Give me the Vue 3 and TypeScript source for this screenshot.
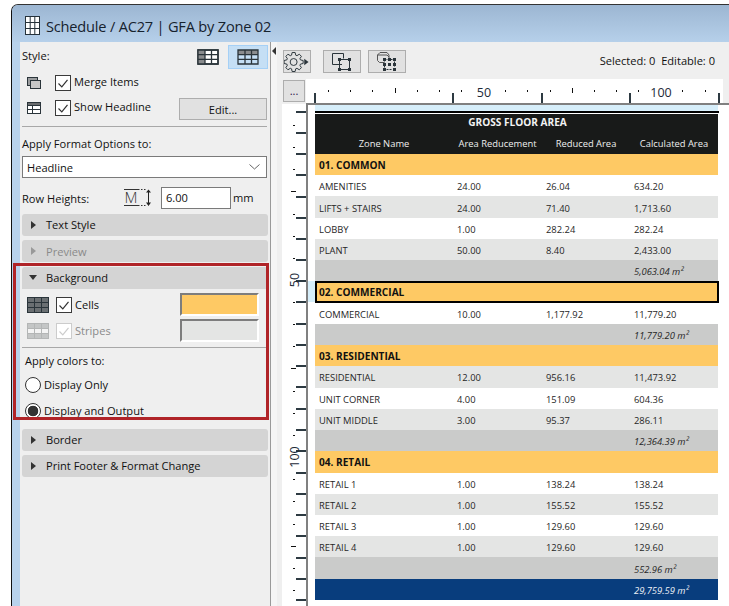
<script setup lang="ts">
type Row = { kind: 'group' | 'white' | 'gray' | 'total' | 'grand'; cells: string[]; selected?: boolean }

const row = (kind: Row['kind'], ...cells: string[]): Row => ({ kind, cells })

const rows: Row[] = [
  row('group', '01. COMMON'),
  row('white', 'AMENITIES', '24.00', '26.04', '634.20'),
  row('gray', 'LIFTS + STAIRS', '24.00', '71.40', '1,713.60'),
  row('white', 'LOBBY', '1.00', '282.24', '282.24'),
  row('gray', 'PLANT', '50.00', '8.40', '2,433.00'),
  row('total', '', '', '', '5,063.04 m²'),
  { kind: 'group', cells: ['02. COMMERCIAL'], selected: true },
  row('white', 'COMMERCIAL', '10.00', '1,177.92', '11,779.20'),
  row('total', '', '', '', '11,779.20 m²'),
  row('group', '03. RESIDENTIAL'),
  row('gray', 'RESIDENTIAL', '12.00', '956.16', '11,473.92'),
  row('white', 'UNIT CORNER', '4.00', '151.09', '604.36'),
  row('gray', 'UNIT MIDDLE', '3.00', '95.37', '286.11'),
  row('total', '', '', '', '12,364.39 m²'),
  row('group', '04. RETAIL'),
  row('white', 'RETAIL 1', '1.00', '138.24', '138.24'),
  row('gray', 'RETAIL 2', '1.00', '155.52', '155.52'),
  row('white', 'RETAIL 3', '1.00', '129.60', '129.60'),
  row('gray', 'RETAIL 4', '1.00', '129.60', '129.60'),
  row('total', '', '', '', '552.96 m²'),
  row('grand', '', '', '', '29,759.59 m²'),
]

const hMajor = [315, 453, 542, 630, 719]
const hMinor = [328, 350, 372, 417, 439, 461, 505, 527, 550, 594, 616, 638, 682, 705, 727]
const hMid = [395, 572]

const vMajor = [112, 133, 154, 175, 197, 218, 239, 260, 281, 302, 324, 345, 366, 387, 409, 430, 451, 473, 494, 515, 536, 558, 579, 600]
const vMinor = [125, 147, 169, 214, 236, 258, 302, 324, 346, 391, 413, 435, 479, 501, 524, 568, 590]
const vMid = [191, 368, 546]

function gear(cx: number, cy: number, ro: number, ri: number, teeth: number): string {
  const pts: string[] = []
  const step = (Math.PI * 2) / teeth
  for (let i = 0; i < teeth; i++) {
    const a = i * step
    const list: [number, number][] = [
      [ri, a - step * 0.38],
      [ro, a - step * 0.2],
      [ro, a + step * 0.2],
      [ri, a + step * 0.38],
    ]
    for (const [r, t] of list) {
      pts.push(`${(cx + r * Math.cos(t)).toFixed(2)} ${(cy + r * Math.sin(t)).toFixed(2)}`)
    }
  }
  return 'M' + pts.join('L') + 'Z'
}
const gearPath = gear(10, 11, 10, 7.4, 8)
</script>

<template>
  <div class="root">
    <div class="window">
      <header class="titlebar">
        <svg class="title-icon" width="15" height="19" viewBox="0 0 15 19">
          <rect x="0.5" y="0.5" width="14" height="18" fill="#fff" stroke="#26323a" />
          <path d="M5.2 0.5V18.5M9.8 0.5V18.5M0.5 6.5H14.5M0.5 12.5H14.5" stroke="#26323a" fill="none" />
        </svg>
        <span class="title-text">Schedule / AC27 | GFA by Zone 02</span>
      </header>

      <div class="body">
        <div class="strip"></div>

        <aside class="panel">
          <div class="style-row">
            <span class="label">Style:</span>
            <svg class="style-a" width="22" height="16" viewBox="0 0 22 16">
              <rect x="1" y="1" width="20" height="14" fill="#fff" stroke="#2a343a" stroke-width="1.5" />
              <rect x="1" y="1" width="7" height="14" fill="#8a8c8e" />
              <path d="M1 1H21V15H1ZM8 1V15M14.5 1V15M1 5.7H21M1 10.3H21" stroke="#2a343a" stroke-width="1.3" fill="none" />
            </svg>
            <button class="style-btn">
              <svg width="22" height="16" viewBox="0 0 22 16">
                <rect x="1" y="1" width="20" height="5" fill="#8a8c8e" />
                <path d="M1 1H21V15H1ZM8 1V15M14.5 1V15M1 5.7H21M1 10.3H21" stroke="#2a343a" stroke-width="1.3" fill="none" />
              </svg>
            </button>
          </div>

          <div class="opt-row merge">
            <svg class="opt-icon" width="14" height="12" viewBox="0 0 14 12">
              <rect x="0.5" y="0.5" width="10" height="8" fill="#9a9c9e" stroke="#2a343a" />
              <rect x="3.5" y="3.5" width="10" height="8" fill="#c8c8c8" stroke="#2a343a" />
            </svg>
            <span class="check">
              <svg width="14" height="14" viewBox="0 0 14 14"><path d="M2.5 7.5L5.8 10.8L11.5 3.8" fill="none" stroke="#333" stroke-width="1.2" /></svg>
            </span>
            <span class="label">Merge Items</span>
          </div>

          <div class="opt-row headline">
            <svg class="opt-icon" width="14" height="12" viewBox="0 0 14 12">
              <rect x="0.5" y="0.5" width="13" height="11" fill="#fff" stroke="#2a343a" />
              <rect x="0.5" y="0.5" width="13" height="3" fill="#6a6c6e" stroke="#2a343a" />
              <path d="M5.5 3.5V11.5M0.5 7.5H13.5" stroke="#2a343a" fill="none" />
            </svg>
            <span class="check">
              <svg width="14" height="14" viewBox="0 0 14 14"><path d="M2.5 7.5L5.8 10.8L11.5 3.8" fill="none" stroke="#333" stroke-width="1.2" /></svg>
            </span>
            <span class="label">Show Headline</span>
            <button class="edit-btn">Edit...</button>
          </div>

          <div class="rule first-rule"></div>

          <div class="label apply-format">Apply Format Options to:</div>
          <div class="select">
            <span>Headline</span>
            <svg width="11" height="6" viewBox="0 0 11 6"><path d="M0.5 0.5L5.5 5L10.5 0.5" fill="none" stroke="#666" /></svg>
          </div>

          <div class="height-row">
            <span class="label height-label">Row Heights:</span>
            <svg class="m-icon" width="27" height="18" viewBox="0 0 27 18">
              <path d="M0 0.5H14" stroke="#333" />
              <path d="M0 16.5H14" stroke="#333" />
              <path d="M14 0.5H22M14 16.5H22" stroke="#333" stroke-dasharray="1.5 1.5" />
              <text x="7" y="14" text-anchor="middle" class="m-letter">M</text>
              <path d="M24.5 1V16" stroke="#222" />
              <path d="M22 3.5L24.5 0.5L27 3.5ZM22 13.5L24.5 17L27 13.5Z" fill="#222" />
            </svg>
            <div class="field">6.00</div>
            <span class="label">mm</span>
          </div>

          <div class="section mt6"><i class="arrow-r"></i>Text Style</div>
          <div class="section mt4 off"><i class="arrow-r"></i>Preview</div>

          <div class="section bg-head"><i class="arrow-d"></i>Background</div>
          <div class="color-row cells">
            <svg width="22" height="16" viewBox="0 0 22 16">
              <rect x="0.5" y="0.5" width="21" height="15" fill="#6a6f72" stroke="#2a343a" />
              <path d="M7.5 0.5V15.5M14.5 0.5V15.5M0.5 5.5H21.5M0.5 10.5H21.5" stroke="#2a343a" fill="none" />
            </svg>
            <span class="check">
              <svg width="14" height="14" viewBox="0 0 14 14"><path d="M2.5 7.5L5.8 10.8L11.5 3.8" fill="none" stroke="#333" stroke-width="1.2" /></svg>
            </span>
            <span class="label">Cells</span>
            <div class="swatch orange"></div>
          </div>
          <div class="color-row stripes">
            <svg width="22" height="16" viewBox="0 0 22 16">
              <rect x="0.5" y="0.5" width="21" height="15" fill="#c4c6c6" stroke="#b4b6b6" />
              <rect x="1" y="5.5" width="20" height="5" fill="#f4f4f4" />
              <path d="M7.5 0.5V15.5M14.5 0.5V15.5M0.5 5.5H21.5M0.5 10.5H21.5" stroke="#b4b6b6" fill="none" />
            </svg>
            <span class="check off">
              <svg width="14" height="14" viewBox="0 0 14 14"><path d="M2.5 7.5L5.8 10.8L11.5 3.8" fill="none" stroke="#ccc" stroke-width="1.2" /></svg>
            </span>
            <span class="label muted">Stripes</span>
            <div class="swatch pale"></div>
          </div>
          <div class="rule color-rule"></div>
          <div class="label colors-label">Apply colors to:</div>
          <div class="radio-row first-radio"><span class="radio"></span><span class="label">Display Only</span></div>
          <div class="radio-row"><span class="radio on"></span><span class="label">Display and Output</span></div>

          <div class="section border-head"><i class="arrow-r"></i>Border</div>
          <div class="section mt4"><i class="arrow-r"></i>Print Footer &amp; Format Change</div>

          <div class="red-frame"></div>
        </aside>

        <div class="splitter"><i class="arrow-l"></i></div>

        <main class="pane">
          <div class="toolbar">
            <button class="tool gear-btn">
              <svg width="27" height="22" viewBox="0 0 27 22">
                <path :d="gearPath" fill="none" stroke="#2a343a" stroke-width="1" />
                <circle cx="10" cy="11" r="3.6" fill="none" stroke="#2a343a" />
                <path d="M21 7.5L25.5 11L21 14.5Z" fill="#2a343a" />
              </svg>
            </button>
            <button class="tool wide t2">
              <svg width="20" height="18" viewBox="0 0 20 18">
                <path d="M10 11.5H0.5V0.5H11.5V5.5" fill="none" stroke="#2a343a" />
                <rect x="7.5" y="6.5" width="10" height="10" fill="none" stroke="#2a343a" />
                <path d="M6 5H9V8H6ZM16 5H19V8H16ZM6 15H9V18H6ZM16 15H19V18H16Z" fill="#2a343a" />
              </svg>
            </button>
            <button class="tool wide t3">
              <svg width="20" height="20" viewBox="0 0 20 20">
                <path d="M7 10.5H2.5L0.5 8.5V3L3 0.5H10L12 3V6M0.5 3H10L12 5" fill="none" stroke="#555" />
                <path d="M7.5 7.5H17.5V15.5M7.5 7.5V17.5H15" fill="none" stroke="#2a343a" stroke-dasharray="2 1" />
                <path d="M6 6H9V9H6ZM11 6H14V9H11ZM16 6H19V9H16ZM6 11H9V14H6ZM11 11H14V14H11ZM16 11H19V14H16ZM6 16H9V19H6ZM16 16H19V19H16Z" fill="#2a343a" />
              </svg>
            </button>
            <span class="status label">Selected: 0&nbsp; Editable: 0</span>
          </div>

          <div class="ruler-row">
            <button class="more">...</button>
            <svg class="h-ruler" viewBox="306 79 417 24" width="417" height="24" preserveAspectRatio="xMinYMin slice">
              <rect v-for="x in hMajor" :key="'a' + x" :x="x - 1" y="93" width="2" height="10" fill="#2d3a42" />
              <rect v-for="x in hMinor" :key="'b' + x" :x="x" y="90" width="1" height="2" fill="#111" />
              <rect v-for="x in hMid" :key="'c' + x" :x="x" y="88" width="1" height="5" fill="#111" />
              <text x="484" y="97" text-anchor="middle" class="ruler-num">50</text>
              <text x="661" y="97" text-anchor="middle" class="ruler-num">100</text>
            </svg>
          </div>

          <div class="doc">
            <svg class="v-ruler" viewBox="282 104 24 502" width="24" height="502">
              <rect v-for="y in vMajor" :key="'d' + y" x="296" :y="y - 1" width="10" height="2" fill="#2d3a42" />
              <rect v-for="y in vMinor" :key="'e' + y" x="293" :y="y" width="2" height="1" fill="#111" />
              <rect v-for="y in vMid" :key="'f' + y" x="291" :y="y" width="5" height="1" fill="#111" />
              <text transform="translate(299 280) rotate(-90)" text-anchor="middle" class="ruler-num">50</text>
              <text transform="translate(299 457) rotate(-90)" text-anchor="middle" class="ruler-num">100</text>
            </svg>

            <div class="sheet">
              <div class="band"></div>
              <div class="topline"></div>
              <div class="table">
                <div class="thead">
                  <div class="thead-title">GROSS FLOOR AREA</div>
                  <div class="thead-cols">
                    <span class="th-name">Zone Name</span>
                    <span>Area Reducement</span>
                    <span>Reduced Area</span>
                    <span>Calculated Area</span>
                  </div>
                </div>
                <div
                  v-for="(r, i) in rows"
                  :key="i"
                  class="tr"
                  :class="[r.kind, { selected: r.selected }]"
                >
                  <template v-if="r.kind === 'group'">
                    <span class="group-name">{{ r.cells[0] }}</span>
                  </template>
                  <template v-else>
                    <span v-for="(c, j) in r.cells" :key="j" class="td" :class="{ sum: r.kind === 'total' || r.kind === 'grand' }">{{ c }}</span>
                  </template>
                </div>
              </div>
            </div>
          </div>
        </main>
      </div>
    </div>
  </div>
</template>

<style scoped>
.root {
  width: 729px;
  height: 606px;
  box-sizing: border-box;
  padding: 4px 0 0 11px;
  background: #fff;
  overflow: hidden;
  font-family: "Open Sans", "Noto Sans", sans-serif;
  color: #111;
}
.window {
  height: 100%;
  display: flex;
  flex-direction: column;
  border-left: 1px solid #111;
  border-top: 1px solid #333;
  border-top-left-radius: 7px;
  overflow: hidden;
  background: #b8d2ec;
}
.titlebar {
  height: 37px;
  flex: none;
  display: flex;
  align-items: center;
  background: linear-gradient(#9cb6d2, #b6d0ea);
  padding: 4px 0 0 13px;
  box-sizing: border-box;
}
.title-text {
  margin-left: 6px;
  margin-top: 1px;
  font-size: 14.6px;
  letter-spacing: -0.2px;
  color: #16222e;
  white-space: nowrap;
}
.body {
  flex: 1;
  display: flex;
  min-height: 0;
}
.strip {
  width: 8px;
  flex: none;
  background: #b8d2ec;
}
.panel {
  position: relative;
  width: 250px;
  flex: none;
  box-sizing: content-box;
  background: #efefef;
  border-right: 1px solid #999;
  padding: 0;
}
.label {
  font-size: 11.1px;
  line-height: 14px;
  white-space: nowrap;
}
.muted {
  color: #8a8a8a;
}
.style-row {
  display: flex;
  align-items: center;
  height: 25px;
  margin-top: 2px;
  padding-left: 2px;
}
.style-row .label {
  flex: 1;
  margin-top: -2px;
}
.style-a {
  margin-right: 9px;
}
.style-btn {
  width: 40px;
  height: 24px;
  margin-right: 2px;
  padding: 0;
  display: flex;
  align-items: center;
  justify-content: center;
  background: #c5dff5;
  border: 1px solid #a5d0f6;
}
.opt-row {
  display: flex;
  align-items: center;
  height: 17px;
  padding-left: 7px;
}
.opt-row > .label {
  margin-top: -2px;
}
.merge {
  margin-top: 5px;
}
.headline {
  margin-top: 8px;
  position: relative;
}
.opt-icon {
  width: 14px;
  flex: none;
  margin-right: 14px;
}
.check {
  width: 16px;
  height: 16px;
  flex: none;
  box-sizing: border-box;
  border: 1px solid #3a3a3a;
  background: #fff;
  margin-right: 3px;
  display: flex;
  align-items: center;
  justify-content: center;
}
.check.off {
  border-color: #ccc;
}
.edit-btn {
  margin-left: auto;
  margin-right: 3px;
  margin-top: 3px;
  width: 88px;
  height: 22px;
  padding: 0;
  background: #e1e1e1;
  border: 1px solid #adadad;
  font: inherit;
  font-size: 11.1px;
  color: #111;
}
.rule {
  height: 1px;
  background: #a8a8a8;
}
.first-rule {
  margin: 10px 3px 0 2px;
}
.apply-format {
  margin: 10px 0 0 2px;
}
.select {
  margin: 5px 3px 0 2px;
  height: 22px;
  box-sizing: border-box;
  background: #fff;
  border: 1px solid #7a7a7a;
  display: flex;
  align-items: center;
  justify-content: space-between;
  padding: 0 6px 0 4px;
  font-size: 11.1px;
}
.height-row {
  display: flex;
  align-items: center;
  margin: 9px 0 0 2px;
  height: 21px;
}
.height-label {
  width: 102px;
  margin-top: 2px;
}
.m-icon {
  flex: none;
  overflow: visible;
}
.m-letter {
  font-size: 15px;
  font-family: "Open Sans", sans-serif;
  font-weight: 300;
  fill: #333;
}
.field {
  width: 70px;
  height: 22px;
  box-sizing: border-box;
  border: 1px solid #7a7a7a;
  background: #fff;
  margin: 0 2px 0 10px;
  padding-left: 4px;
  font-size: 11.1px;
  line-height: 20px;
}
.section {
  height: 22px;
  margin: 0 2px;
  box-sizing: border-box;
  background: #d4d4d4;
  border-radius: 3px;
  display: flex;
  align-items: center;
  font-size: 11.1px;
  font-weight: 500;
  color: #111;
  padding: 0 0 1px 9px;
}
.section.off {
  color: #8a8a8a;
  padding-bottom: 0;
}
.section.off .arrow-r {
  border-left-color: #999;
}
.mt6 {
  margin-top: 6px;
}
.mt4 {
  margin-top: 4px;
}
.arrow-r {
  width: 0;
  height: 0;
  border: 4px solid transparent;
  border-left: 5px solid #333;
  border-right: 0;
  margin-right: 10px;
}
.arrow-d {
  width: 0;
  height: 0;
  border: 4px solid transparent;
  border-top: 5px solid #333;
  border-bottom: 0;
  margin: 0 9px 0 -2px;
}
.bg-head {
  margin-top: 5px;
  margin-right: 2px;
  border-radius: 3px 3px 0 0;
}
.color-row {
  display: flex;
  align-items: center;
  height: 23px;
  padding-left: 7px;
}
.cells {
  margin-top: 4px;
}
.stripes {
  margin-top: 3px;
}
.color-row > svg {
  margin-right: 7px;
  flex: none;
}
.swatch {
  margin-left: auto;
  margin-right: 11px;
  width: 79px;
  height: 23px;
  box-sizing: border-box;
  border: 2px solid;
  border-color: #7d7d7d #fff #fff #7d7d7d;
}
.orange {
  background: #fec964;
}
.pale {
  background: #e4e5e4;
}
.color-rule {
  margin: 5px 2px 0;
}
.colors-label {
  margin: 6px 0 0 5px;
}
.radio-row {
  display: flex;
  align-items: center;
  height: 16px;
  padding-left: 5px;
  margin-top: 10px;
}
.first-radio {
  margin-top: 9px;
}
.radio {
  width: 16px;
  height: 16px;
  box-sizing: border-box;
  border: 1px solid #333;
  border-radius: 50%;
  background: #fff;
  margin-right: 3px;
  flex: none;
}
.radio.on {
  background: radial-gradient(circle, #333 0 5px, #fff 5.6px);
}
.border-head {
  margin-top: 10px;
}
.red-frame {
  position: absolute;
  left: -7px;
  top: 221px;
  width: 256px;
  height: 157px;
  box-sizing: border-box;
  border: 3px solid #b02428;
  pointer-events: none;
}
.splitter {
  width: 6px;
  flex: none;
  background: #f5f5f5;
  position: relative;
}
.arrow-l {
  position: absolute;
  left: 1px;
  top: 5px;
  width: 0;
  height: 0;
  border: 4px solid transparent;
  border-right: 4px solid #333;
  border-left: 0;
}
.pane {
  flex: 1;
  min-width: 0;
  background: #efefef;
  display: flex;
  flex-direction: column;
  padding-left: 5px;
}
.toolbar {
  height: 37px;
  flex: none;
  display: flex;
  align-items: flex-start;
  padding: 8px 0 0 1px;
  box-sizing: border-box;
}
.tool {
  padding: 0;
  height: 23px;
  box-sizing: border-box;
  background: #e1e1e1;
  border: 1px solid #adadad;
  display: flex;
  align-items: center;
  justify-content: center;
}
.gear-btn {
  width: 28px;
}
.wide {
  width: 38px;
}
.t2 {
  margin-left: 12px;
}
.t3 {
  margin-left: 7px;
}
.status {
  margin-left: auto;
  margin-right: 14px;
  margin-top: 4px;
}
.ruler-row {
  height: 24px;
  flex: none;
  display: flex;
  align-items: flex-start;
}
.more {
  width: 22px;
  height: 22px;
  margin: 1px 0 0 1px;
  padding: 0 0 1px;
  box-sizing: border-box;
  background: #e1e1e1;
  border: 1px solid #adadad;
  font: inherit;
  font-size: 11.1px;
  line-height: 10px;
  color: #30104a;
}
.h-ruler {
  margin-left: 1px;
  background: #fff;
  flex: none;
  display: block;
}
.ruler-num {
  font-family: "Open Sans", sans-serif;
  font-size: 12.5px;
  fill: #1c2a38;
}
.doc {
  flex: 1;
  min-height: 0;
  display: flex;
  align-items: flex-start;
}
.v-ruler {
  flex: none;
  background: #fff;
  display: block;
  margin-top: 1px;
}
.sheet {
  flex: none;
  width: 423px;
  height: 503px;
  box-sizing: border-box;
  background: #fff;
  border-top: 2px solid #808080;
  border-left: 2px solid #808080;
  padding-left: 7px;
  overflow: hidden;
}
.band {
  width: 403px;
  height: 6px;
  background: #d6eefa;
}
.topline {
  width: 404px;
  height: 2px;
  background: #000;
  margin-bottom: 1px;
}
.table {
  width: 403px;
  font-size: 9.4px;
}
.thead {
  height: 40px;
  background: #181a19;
  color: #eee;
}
.thead-title {
  height: 17px;
  line-height: 17px;
  text-align: center;
  font-weight: 700;
  font-size: 10.1px;
  color: #f2f2f2;
  transform: translateX(1px);
}
.thead-cols {
  display: grid;
  grid-template-columns: 138px 89px 88px 88px;
  height: 23px;
  line-height: 25px;
  text-align: center;
  white-space: nowrap;
}
.tr {
  display: grid;
  grid-template-columns: 138px 89px 88px 88px;
  height: 21.238px;
  padding-top: 2px;
  line-height: 19px;
  align-items: center;
  color: #262626;
  box-sizing: border-box;
}
.td {
  padding-left: 4px;
  white-space: nowrap;
}
.sum {
  font-style: italic;
}
.white {
  background: #fff;
}
.gray {
  background: #e4e5e4;
}
.total {
  background: #cacbca;
}
.group {
  display: flex;
  background: #fec964;
  font-weight: 700;
  font-size: 10.1px;
  color: #111;
  padding-left: 4px;
  padding-top: 1px;
  line-height: 20px;
}
.grand {
  background: #083d7d;
  color: #eef2f7;
}
.selected {
  position: relative;
  width: 404px;
  border: 2px solid #000;
  padding: 0 0 0 2px;
  line-height: 17px;
}
.selected::before {
  content: "";
  position: absolute;
  left: -10px;
  top: -2px;
  width: 8px;
  height: 21px;
  background: #d6eefa;
}
</style>

<style>
html,
body {
  margin: 0;
  background: #fff;
}
</style>
